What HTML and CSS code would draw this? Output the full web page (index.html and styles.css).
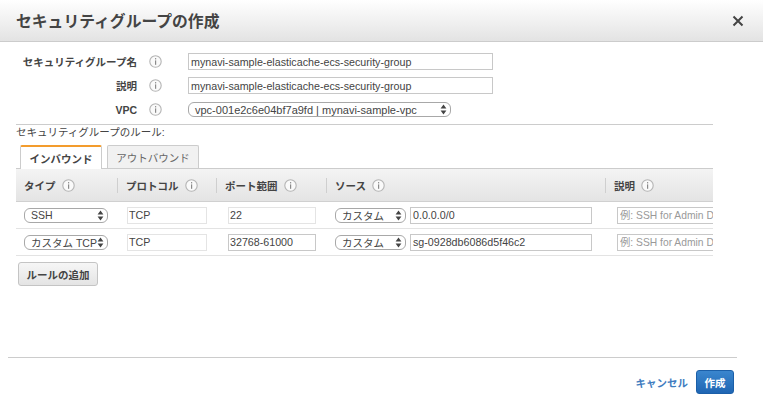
FILE: index.html
```html
<!DOCTYPE html>
<html lang="ja">

<head>
    <meta charset="UTF-8">
    <title>セキュリティグループの作成</title>
    <link rel="stylesheet" href="styles.css">
</head>

<body>
    <svg class="defs" width="0" height="0">
        <symbol id="info" viewBox="0 0 13 13">
            <circle cx="6.5" cy="6.5" r="5.7" fill="#fafafa" stroke="#b4b4b4" stroke-width="1.1" />
            <rect x="6" y="5.4" width="1.2" height="4.4" fill="#8a8a8a" />
            <rect x="6" y="3.1" width="1.2" height="1.3" fill="#8a8a8a" />
        </symbol>
        <symbol id="updown" viewBox="0 0 7 11">
            <path d="M3.5 0.5 L6.4 4.5 H0.6 Z M3.5 10.5 L0.6 6.5 H6.4 Z" fill="#444" />
        </symbol>
    </svg>

    <div class="dialog">
        <header class="dialog-header">
            <h1>セキュリティグループの作成</h1>
            <svg class="close" width="12" height="12" viewBox="0 0 12 12">
                <path d="M1.5 1.5 L10.5 10.5 M10.5 1.5 L1.5 10.5" stroke="#444" stroke-width="2" />
            </svg>
        </header>

        <div class="fields">
            <div class="field">
                <label>セキュリティグループ名</label>
                <svg class="info"><use href="#info" /></svg>
                <input class="text wide" type="text" value="mynavi-sample-elasticache-ecs-security-group">
            </div>
            <div class="field">
                <label>説明</label>
                <svg class="info"><use href="#info" /></svg>
                <input class="text wide" type="text" value="mynavi-sample-elasticache-ecs-security-group">
            </div>
            <div class="field">
                <label>VPC</label>
                <svg class="info"><use href="#info" /></svg>
                <div class="select vpc">
                    <span>vpc-001e2c6e04bf7a9fd | mynavi-sample-vpc</span>
                    <svg class="arrows"><use href="#updown" /></svg>
                </div>
            </div>
        </div>

        <div class="rules">
            <p class="rules-title">セキュリティグループのルール:</p>
            <div class="tabs">
                <div class="tab active">インバウンド</div>
                <div class="tab">アウトバウンド</div>
            </div>

            <div class="table-wrap">
                <table class="rule-table">
                    <thead>
                        <tr>
                            <th class="col-type"><div class="th-in">タイプ <svg class="info"><use href="#info" /></svg></div></th>
                            <th class="col-proto"><div class="th-in">プロトコル <svg class="info"><use href="#info" /></svg></div></th>
                            <th class="col-port"><div class="th-in">ポート範囲 <svg class="info"><use href="#info" /></svg></div></th>
                            <th class="col-source"><div class="th-in">ソース <svg class="info"><use href="#info" /></svg></div></th>
                            <th class="col-desc"><div class="th-in">説明 <svg class="info"><use href="#info" /></svg></div></th>
                        </tr>
                    </thead>
                    <tbody>
                        <tr>
                            <td>
                                <div class="select type"><span>SSH</span><svg class="arrows"><use href="#updown" /></svg></div>
                            </td>
                            <td><input class="text faint proto" type="text" value="TCP"></td>
                            <td><input class="text faint port" type="text" value="22"></td>
                            <td>
                                <div class="source">
                                    <div class="select custom"><span>カスタム</span><svg class="arrows"><use href="#updown" /></svg></div>
                                    <input class="text cidr" type="text" value="0.0.0.0/0">
                                </div>
                            </td>
                            <td><input class="text desc" type="text" placeholder="例: SSH for Admin Desktop"></td>
                        </tr>
                        <tr>
                            <td>
                                <div class="select type"><span>カスタム TCP</span><svg class="arrows"><use href="#updown" /></svg></div>
                            </td>
                            <td><input class="text faint proto" type="text" value="TCP"></td>
                            <td><input class="text port" type="text" value="32768-61000"></td>
                            <td>
                                <div class="source">
                                    <div class="select custom"><span>カスタム</span><svg class="arrows"><use href="#updown" /></svg></div>
                                    <input class="text cidr" type="text" value="sg-0928db6086d5f46c2">
                                </div>
                            </td>
                            <td><input class="text desc" type="text" placeholder="例: SSH for Admin Desktop"></td>
                        </tr>
                    </tbody>
                </table>
            </div>

            <button class="btn add-rule">ルールの追加</button>
        </div>

        <footer class="dialog-footer">
            <a class="cancel">キャンセル</a>
            <button class="btn primary">作成</button>
        </footer>
    </div>
</body>

</html>
```

FILE: styles.css
```css
body {
    font-family: "Liberation Sans", "Noto Sans CJK JP", sans-serif;
    margin: 0;
    background-color: #ffffff;
    color: #444444;
    font-size: 10.5px;
}

.defs {
    display: none;
}

.dialog {
    width: 763px;
    height: 408px;
    overflow: hidden;
}

.dialog-header {
    height: 41px;
    padding: 0 19px 0 16px;
    display: flex;
    align-items: center;
    justify-content: space-between;
    background: linear-gradient(#ffffff, #e3e3e3);
    border-bottom: 1px solid #cccccc;
}

.dialog-header h1 {
    margin: 0;
    font-size: 15.8px;
    font-weight: bold;
    color: #444444;
}

.fields {
    padding: 11px 0 0 0;
    display: flex;
    flex-direction: column;
    gap: 7px;
}

.field {
    display: flex;
    align-items: center;
    height: 17px;
}

.field label {
    width: 137px;
    text-align: right;
    font-weight: bold;
    font-size: 10.5px;
}

.field .info {
    margin: 0 26px 0 12px;
}

.info {
    width: 13px;
    height: 13px;
    flex-shrink: 0;
}

.text {
    box-sizing: border-box;
    height: 17px;
    border: 1px solid #c8c8c8;
    background: #ffffff;
    padding: 0 2px;
    margin: 0;
    font-family: inherit;
    font-size: 10.7px;
    color: #444444;
    outline: none;
}

.text::placeholder {
    color: #999999;
}

.wide {
    width: 305px;
}

.faint {
    border-color: #e4e4e4;
}

.select {
    box-sizing: border-box;
    height: 15px;
    display: flex;
    align-items: center;
    justify-content: space-between;
    border: 1px solid #a8a8a8;
    border-radius: 6px;
    background: #ffffff;
    padding: 0 3px 0 6px;
    white-space: nowrap;
    font-size: 10.5px;
}

.arrows {
    width: 7px;
    height: 11px;
    flex-shrink: 0;
}

.vpc {
    width: 263px;
    font-size: 11px;
}

.rules {
    margin: 6px 50px 0 16px;
    border-top: 1px solid #cccccc;
}

.rules-title {
    margin: 0;
    height: 20px;
    line-height: 14px;
}

.tabs {
    display: flex;
    align-items: flex-end;
    gap: 5px;
    padding-left: 4px;
    height: 23px;
}

.tab {
    box-sizing: border-box;
    height: 23px;
    width: 92px;
    display: flex;
    align-items: center;
    justify-content: center;
    border: 1px solid #cccccc;
    border-bottom: none;
    border-radius: 2px 2px 0 0;
    background: #f1f1f1;
    color: #666666;
}

.tab.active {
    height: 24px;
    width: 82px;
    margin-bottom: -1px;
    border-top: 2px solid #f39c2d;
    background: #ffffff;
    font-weight: bold;
    color: #444444;
    position: relative;
}

.table-wrap {
    overflow: hidden;
    border-top: 1px solid #cccccc;
}

.rule-table {
    table-layout: fixed;
    width: 800px;
    border-collapse: collapse;
}

.rule-table th {
    height: 32px;
    padding: 0;
    text-align: left;
    background: linear-gradient(#f4f4f4, #e4e4e4);
    border-bottom: 1px solid #d0d0d0;
    font-size: 10.5px;
}

.col-type {
    width: 101px;
}

.col-proto {
    width: 99px;
}

.col-port {
    width: 110px;
}

.col-source {
    width: 279px;
}

.th-in {
    height: 15px;
    display: flex;
    align-items: center;
    gap: 6px;
    padding-left: 8px;
    border-left: 1px solid #cfcfcf;
}

.col-type .th-in {
    border-left: none;
}

.rule-table td {
    height: 26px;
    padding: 0;
    border-bottom: 1px solid #e3e3e3;
}

.rule-table td:first-child {
    padding-left: 8px;
}

.type {
    width: 84px;
}

.proto {
    width: 80px;
    margin-left: 10px;
    padding: 0 1px;
}

.port {
    width: 88px;
    margin-left: 12px;
    padding: 0 1px;
}

.source {
    display: flex;
    align-items: center;
    gap: 4px;
    padding-left: 9px;
}

.custom {
    width: 71px;
}

.cidr {
    width: 182px;
}

.desc {
    width: 200px;
    margin-left: 12px;
    font-size: 10.3px;
}

.btn {
    font-family: inherit;
    font-size: 10.5px;
    font-weight: bold;
    border-radius: 3px;
    cursor: pointer;
}

.add-rule {
    display: block;
    width: 80px;
    height: 24px;
    margin: 6px 0 0 2px;
    padding: 0;
    border: 1px solid #c4c4c4;
    background: linear-gradient(#f6f6f6, #e4e4e4);
    color: #444444;
}

.dialog-footer {
    margin: 71px 26px 0 8px;
    padding: 12px 3px 0 0;
    border-top: 1px solid #cccccc;
    display: flex;
    align-items: center;
    justify-content: flex-end;
    gap: 8px;
}

.cancel {
    color: #3e7cc0;
    font-weight: bold;
}

.primary {
    width: 38px;
    height: 24px;
    padding: 0;
    border: 1px solid #1b5fa8;
    background: linear-gradient(#3a86ce, #1f66b3);
    color: #ffffff;
}
```
